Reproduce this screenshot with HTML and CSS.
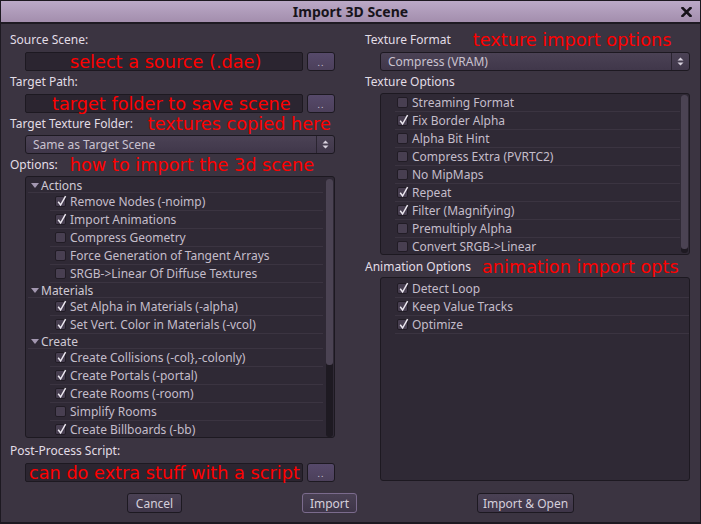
FILE: index.html
```html
<!DOCTYPE html>
<html>
<head>
<meta charset="utf-8">
<link rel="stylesheet" href="styles.css">
</head>
<body>
<div class="window">
  <div class="titlebar">
    <span></span>
    <span class="title">Import 3D Scene</span>
    <svg class="close" width="11" height="10" viewBox="0 0 11 10"><path d="M1.5 1 L9.5 9 M9.5 1 L1.5 9" stroke="#17131a" stroke-width="2.6" stroke-linecap="square"/></svg>
  </div>
  <div class="body">
    <div class="col">
      <div class="label lbl-first">Source Scene:</div>
      <div class="field-row">
        <div class="line-edit"><span class="note note-src">select a source (.dae)</span></div>
        <div class="dots">..</div>
      </div>
      <div class="label">Target Path:</div>
      <div class="field-row">
        <div class="line-edit"><span class="note note-path">target folder to save scene</span></div>
        <div class="dots">..</div>
      </div>
      <div class="label">Target Texture Folder:<span class="note note-tex">textures copied here</span></div>
      <div class="option">
        <span class="option-text">Same as Target Scene</span>
        <span class="option-arrows"><svg width="7" height="9" viewBox="0 0 7 9"><path d="M3.5 0.5 L6.5 3.5 L0.5 3.5 Z M0.5 5.5 L6.5 5.5 L3.5 8.5 Z" fill="#d8d2de"/></svg></span>
      </div>
      <div class="label">Options:<span class="note note-opt">how to import the 3d scene</span></div>
      <div class="tree tree-options">
        <div class="rows">
          <div class="cat"><span class="arrow"></span>Actions</div>
          <div class="item"><span class="cb on"></span>Remove Nodes (-noimp)</div>
          <div class="item"><span class="cb on"></span>Import Animations</div>
          <div class="item"><span class="cb"></span>Compress Geometry</div>
          <div class="item"><span class="cb"></span>Force Generation of Tangent Arrays</div>
          <div class="item"><span class="cb"></span>SRGB-&gt;Linear Of Diffuse Textures</div>
          <div class="cat"><span class="arrow"></span>Materials</div>
          <div class="item"><span class="cb on"></span>Set Alpha in Materials (-alpha)</div>
          <div class="item"><span class="cb on"></span>Set Vert. Color in Materials (-vcol)</div>
          <div class="cat"><span class="arrow"></span>Create</div>
          <div class="item"><span class="cb on"></span>Create Collisions (-col},-colonly)</div>
          <div class="item"><span class="cb on"></span>Create Portals (-portal)</div>
          <div class="item"><span class="cb on"></span>Create Rooms (-room)</div>
          <div class="item"><span class="cb"></span>Simplify Rooms</div>
          <div class="item"><span class="cb on"></span>Create Billboards (-bb)</div>
        </div>
        <div class="vscroll vscroll-left"><div class="grab grab-left"></div></div>
      </div>
      <div class="label lbl-post">Post-Process Script:</div>
      <div class="field-row">
        <div class="line-edit"><span class="note note-script">can do extra stuff with a script</span></div>
        <div class="dots">..</div>
      </div>
    </div>

    <div class="col">
      <div class="label lbl-first">Texture Format<span class="note note-fmt">texture import options</span></div>
      <div class="option">
        <span class="option-text">Compress (VRAM)</span>
        <span class="option-arrows"><svg width="7" height="9" viewBox="0 0 7 9"><path d="M3.5 0.5 L6.5 3.5 L0.5 3.5 Z M0.5 5.5 L6.5 5.5 L3.5 8.5 Z" fill="#d8d2de"/></svg></span>
      </div>
      <div class="label">Texture Options</div>
      <div class="tree tree-tex">
        <div class="rows">
          <div class="item item-r"><span class="cb"></span>Streaming Format</div>
          <div class="item item-r"><span class="cb on"></span>Fix Border Alpha</div>
          <div class="item item-r"><span class="cb"></span>Alpha Bit Hint</div>
          <div class="item item-r"><span class="cb"></span>Compress Extra (PVRTC2)</div>
          <div class="item item-r"><span class="cb"></span>No MipMaps</div>
          <div class="item item-r"><span class="cb on"></span>Repeat</div>
          <div class="item item-r"><span class="cb on"></span>Filter (Magnifying)</div>
          <div class="item item-r"><span class="cb"></span>Premultiply Alpha</div>
          <div class="item item-r"><span class="cb"></span>Convert SRGB-&gt;Linear</div>
        </div>
        <div class="vscroll vscroll-right"><div class="grab grab-right"></div></div>
      </div>
      <div class="label lbl-anim">Animation Options<span class="note note-anim">animation import opts</span></div>
      <div class="tree tree-anim">
        <div class="rows">
          <div class="item item-r"><span class="cb on"></span>Detect Loop</div>
          <div class="item item-r"><span class="cb on"></span>Keep Value Tracks</div>
          <div class="item item-r"><span class="cb on"></span>Optimize</div>
        </div>
      </div>
    </div>

    <div class="buttons">
      <div class="btn btn-cancel">Cancel</div>
      <div class="btn btn-import">Import</div>
      <div class="btn btn-open">Import &amp; Open</div>
    </div>
  </div>
</div>
</body>
</html>
```

FILE: styles.css
```css
* { box-sizing: border-box; margin: 0; padding: 0; }

html, body {
  margin: 0;
  background: #18141b;
}

body {
  font-family: "Noto Sans", "DejaVu Sans", sans-serif;
  font-size: 12px;
}

.window {
  width: 701px;
  height: 524px;
  background: #3b3441;
  border-left: 1px solid #1d1921;
  border-right: 1px solid #1d1921;
  border-bottom: 2px solid #1d1921;
  overflow: hidden;
}

.titlebar {
  height: 24px;
  border-top: 1px solid #1c181f;
  border-bottom: 2px solid #1e1a22;
  background: linear-gradient(#bba9c7, #a38ead);
  display: grid;
  grid-template-columns: 1fr auto 1fr;
  align-items: center;
}

.title {
  font-weight: bold;
  font-size: 14px;
  color: #18141b;
  line-height: 21px;
}

.close {
  justify-self: end;
  margin-right: 8px;
  margin-top: 1px;
}

.body {
  display: grid;
  grid-template-columns: 325px 325px;
  column-gap: 30px;
  padding: 0 10px 0 9px;
}

.col {
  display: flex;
  flex-direction: column;
}

.label {
  height: 16px;
  line-height: 16px;
  margin-top: 3px;
  color: #e2dde6;
  display: flex;
  align-items: center;
  white-space: nowrap;
}

.lbl-first { margin-top: 8px; }
.lbl-post { margin-top: 5px; }
.lbl-anim { margin-top: 4px; }

.note {
  font-family: "DejaVu Sans", sans-serif;
  font-size: 17.7px;
  color: #ff0000;
  white-space: nowrap;
  line-height: 16px;
}

.note-tex { margin-left: 15px; }
.note-opt { margin-left: 12px; }
.note-fmt { margin-left: 22px; }
.note-anim { margin-left: 11px; }

.field-row {
  display: flex;
  gap: 4px;
  margin-left: 15px;
  margin-top: 4px;
  height: 19px;
}

.field-row + .label { margin-top: 3px; }

.line-edit {
  flex: 1;
  background: #2b2530;
  border: 1px solid #1d1921;
  border-radius: 2px;
  display: flex;
  align-items: center;
  overflow: visible;
}

.note-src { margin-left: 44px; }
.note-path { margin-left: 26px; }
.note-script { margin-left: 3px; }

.dots {
  width: 28px;
  background: linear-gradient(#56496a, #4c405b);
  border: 1px solid #1d1921;
  border-radius: 3px;
  color: #d0c8d8;
  font-size: 9px;
  line-height: 9px;
  display: flex;
  align-items: flex-end;
  justify-content: center;
  padding-bottom: 3px;
  letter-spacing: 1px;
}

.option {
  margin-left: 15px;
  margin-top: 3px;
  height: 19px;
  background: linear-gradient(#4b4255, #40374a);
  border: 1px solid #1d1921;
  border-radius: 3px;
  display: flex;
  align-items: center;
  color: #c9c2cf;
}

.col .lbl-first + .option { margin-top: 4px; }

.option-text {
  flex: 1;
  padding-left: 7px;
}

.option-arrows {
  width: 18px;
  height: 100%;
  border-left: 1px solid #2a2430;
  display: flex;
  align-items: center;
  justify-content: center;
}

.tree {
  margin-left: 15px;
  margin-top: 3px;
  background: #2f2935;
  border: 1px solid #1d1921;
  border-radius: 3px;
  display: flex;
  overflow: hidden;
}

.tree-options { height: 262px; padding-top: 1px; }
.tree-tex { height: 162px; }
.tree-anim { height: 204px; margin-top: 2px; padding-top: 2px; }

.rows {
  flex: 1;
  display: flex;
  flex-direction: column;
  min-width: 0;
}

.cat {
  flex: none;
  height: 15px;
  margin-left: 2px;
  border-bottom: 1px solid #3b3441;
  display: flex;
  align-items: center;
  color: #cfc9d4;
  white-space: nowrap;
}

.arrow {
  width: 0;
  height: 0;
  border-left: 4px solid transparent;
  border-right: 4px solid transparent;
  border-top: 5px solid #a397b0;
  margin-left: 3px;
  margin-right: 2px;
}

.item {
  flex: none;
  height: 18px;
  margin-left: 24px;
  padding-left: 5px;
  border-bottom: 1px solid #3b3441;
  display: flex;
  align-items: center;
  color: #c4bdca;
  white-space: nowrap;
}

.item-r {
  margin-left: 14px;
  padding-left: 2px;
}

.cb {
  position: relative;
  flex: none;
  width: 11px;
  height: 11px;
  margin-right: 4px;
  background: #483f51;
  border: 1px solid #211c25;
  border-radius: 2px;
}

.cb.on::after {
  content: "";
  position: absolute;
  left: 1px;
  top: -2px;
  width: 10px;
  height: 12px;
  background: url("data:image/svg+xml;utf8,<svg xmlns='http://www.w3.org/2000/svg' width='10' height='12' viewBox='0 0 10 12'><path d='M1.2 6.8 L3.6 10 L8.6 1.2' fill='none' stroke='%23ece8f0' stroke-width='1.5'/></svg>") no-repeat;
}

.vscroll {
  flex: none;
  width: 7px;
  background: #1e1a22;
  border-radius: 3px;
  display: flex;
  flex-direction: column;
}

.vscroll-left { margin: 1px 1px 0 3px; }
.vscroll-right { margin: 1px 1px 1px 1px; }

.grab {
  background: #4b4353;
  border-radius: 3px;
}

.grab-left { height: 186px; }
.grab-right { height: 154px; }

.buttons {
  grid-column: 1 / -1;
  display: flex;
  gap: 120px;
  padding-left: 117px;
  margin-top: 11px;
}

.btn {
  height: 20px;
  border: 1px solid #1d1921;
  border-radius: 3px;
  background: linear-gradient(#4a4154, #3e3548);
  color: #d5cfdb;
  display: flex;
  align-items: center;
  justify-content: center;
}

.btn-cancel { width: 55px; }
.btn-import { width: 55px; border-color: #7b6b8d; }
.btn-open { width: 97px; }
```
